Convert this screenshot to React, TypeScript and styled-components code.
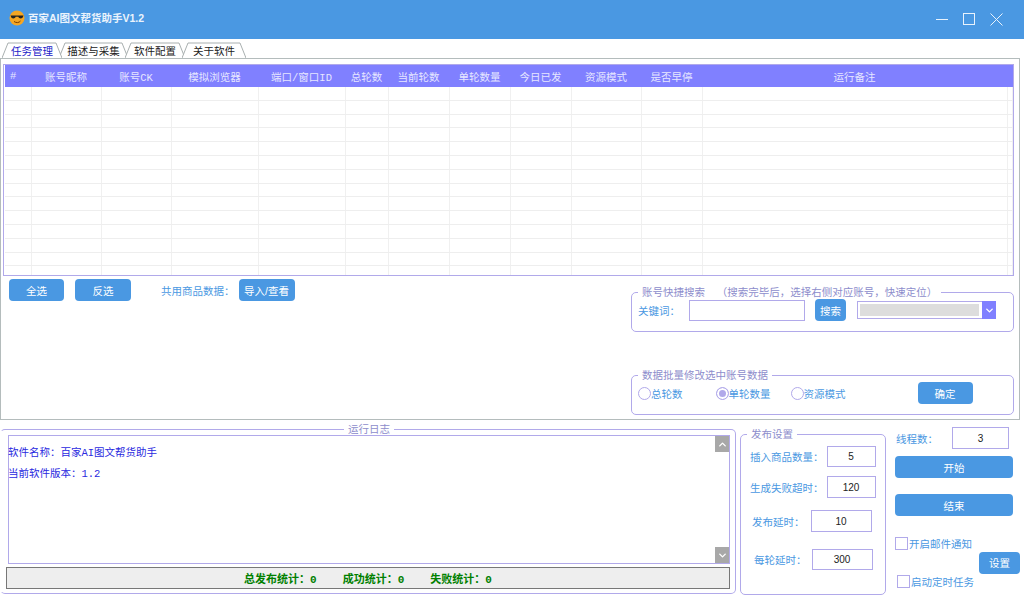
import styled, { createGlobalStyle } from 'styled-components'
import { ChevronDown, ChevronUp } from 'lucide-react'

const Global = createGlobalStyle`
  * { box-sizing: border-box; }
  html, body { margin: 0; padding: 0; background: #fff; }
  body { font-family: "Liberation Sans", "Noto Sans CJK SC", sans-serif; font-size: 10.5px; }
`

const blue = '#4a98e2'
const lilac = '#b1a9ea'
const colTemplate = '27px 70px 70px 87px 87px 43px 61px 61px 61px 70px 61px 305px 1fr'

const Page = styled.div`
  width: 1024px;
  height: 601px;
  overflow: hidden;
  display: flex;
  flex-direction: column;
`

const TitleBar = styled.header`
  height: 39px;
  flex: none;
  background: ${blue};
  display: flex;
  align-items: center;
  padding: 0 21px 4px 9px;
  color: #eaf3fc;
`

const AppName = styled.span`
  margin-left: 3px;
  font-weight: bold;
  font-size: 10.5px;
`

const WinButtons = styled.div`
  margin-left: auto;
  display: flex;
  align-items: center;
  gap: 15px;
  padding-top: 3px;
`

const TabStrip = styled.nav`
  height: 19px;
  flex: none;
  display: flex;
  align-items: flex-end;
  padding: 0 0 0 2px;
`

const Tab = styled.div<{ $w: number; $active?: boolean }>`
  position: relative;
  width: ${(p) => p.$w}px;
  height: 16px;
  margin-right: -3px;
  display: flex;
  align-items: center;
  justify-content: center;
  color: ${(p) => (p.$active ? '#2222c8' : '#222')};
  z-index: ${(p) => (p.$active ? 2 : 1)};

  svg {
    position: absolute;
    inset: 0;
    z-index: -1;
  }
`

const MainPanel = styled.section`
  height: 362px;
  flex: none;
  width: 1020px;
  border: 1px solid #b4bcbc;
  padding: 5px 5px 0 2px;
  display: flex;
  flex-direction: column;
`

const TableBox = styled.div`
  height: 212px;
  flex: none;
  border: 1px solid ${lilac};
  padding: 0 0 0 1px;
  overflow: hidden;
`

const HeadRow = styled.div`
  height: 22px;
  display: grid;
  grid-template-columns: ${colTemplate};
  background: #8080ff;
  color: #e6e6ff;
  align-items: center;
`

const HeadCell = styled.span<{ $left?: boolean }>`
  text-align: ${(p) => (p.$left ? 'left' : 'center')};
  padding: ${(p) => (p.$left ? '0 0 0 5px' : '0 2px 0 0')};
  font-family: "Liberation Mono", "Noto Sans CJK SC", monospace;
  font-size: 10.5px;
  white-space: nowrap;
`

const BodyRow = styled.div`
  height: 13.8px;
  display: grid;
  grid-template-columns: ${colTemplate};
  border-bottom: 1px solid #eeeeee;
`

const BodyCell = styled.span`
  border-right: 1px solid #f0f0f0;
`

const LowerRow = styled.div`
  flex: 1;
  display: flex;
  justify-content: space-between;
`

const ToolRow = styled.div`
  margin: 3px 0 0 6px;
  display: flex;
  align-items: center;
  height: 22px;
`

const Btn = styled.button<{ $w: number; $h?: number; $ml?: number; $mt?: number }>`
  width: ${(p) => p.$w}px;
  height: ${(p) => p.$h ?? 22}px;
  margin-left: ${(p) => p.$ml ?? 0}px;
  margin-top: ${(p) => p.$mt ?? 0}px;
  flex: none;
  padding: 0;
  border: none;
  border-radius: 4px;
  background: ${blue};
  color: #fff;
  font: inherit;
`

const Label = styled.span<{ $ml?: number }>`
  color: ${blue};
  margin-left: ${(p) => p.$ml ?? 0}px;
  white-space: nowrap;
`

const RightCol = styled.div`
  width: 383px;
  margin-top: 9px;
  display: flex;
  flex-direction: column;
  gap: 36px;
`

const Group = styled.fieldset`
  margin: 0;
  min-width: 0;
  border: 1px solid ${lilac};
  border-radius: 5px;
  color: ${blue};
`

const Legend = styled.legend<{ $center?: boolean; $ml?: number }>`
  padding: 0 4px;
  margin: ${(p) => (p.$center ? '0 auto' : `0 0 0 ${p.$ml ?? 6}px`)};
  height: 14px;
  line-height: 14px;
  color: #8d8dcc;
  white-space: pre;
`

const RowGroup = styled(Group)`
  height: 47px;
  padding: 0 6px;
  display: flex;
  align-items: center;
`

const TextBox = styled.div<{ $w: number; $h?: number; $ml?: number }>`
  width: ${(p) => p.$w}px;
  height: ${(p) => p.$h ?? 21}px;
  margin-left: ${(p) => p.$ml ?? 0}px;
  flex: none;
  border: 1px solid ${lilac};
  display: flex;
  align-items: center;
  justify-content: center;
  color: #222;
  font-size: 10px;
  background: #fff;
`

const SelectBox = styled.div`
  width: 139px;
  height: 18px;
  margin-left: 11px;
  border: 1px solid ${lilac};
  display: flex;
  padding: 2px 0 2px 2px;
  position: relative;
`

const SelectValue = styled.div`
  width: 119px;
  background: #dddddd;
`

const SelectArrow = styled.div`
  position: absolute;
  top: -1px;
  right: -1px;
  bottom: -1px;
  width: 14px;
  background: #8080ff;
  color: #fff;
  display: flex;
  align-items: center;
  justify-content: center;
`

const Radio = styled.span<{ $on?: boolean; $ml?: number }>`
  width: 13px;
  height: 13px;
  margin-left: ${(p) => p.$ml ?? 0}px;
  flex: none;
  border: 1px solid ${lilac};
  border-radius: 50%;
  background: ${(p) => (p.$on ? lilac : '#fff')};
  box-shadow: ${(p) => (p.$on ? 'inset 0 0 0 2px #fff' : 'none')};
`

const BottomRow = styled.div`
  flex: 1;
  display: flex;
  margin-top: 2px;
`

const LogGroup = styled(Group)`
  width: 736px;
  height: 172px;
  padding: 0 5px 0 7px;
  border-left-color: transparent;
`

const LogBox = styled.div`
  position: relative;
  height: 129px;
  margin-top: -1px;
  border: 1px solid ${lilac};
  padding: 7px 0 0 0;
  color: #2a2ae0;
  font-family: "Liberation Mono", "Noto Sans CJK SC", monospace;
  line-height: 21px;
`

const LogLine = styled.div`
  margin-left: -1px;
  white-space: nowrap;
`

const ScrollBtn = styled.div<{ $down?: boolean }>`
  position: absolute;
  right: 0;
  ${(p) => (p.$down ? 'bottom: 0;' : 'top: 0;')}
  width: 14px;
  height: 16px;
  background: #a8a8a8;
  color: #fff;
  display: flex;
  align-items: center;
  justify-content: center;
`

const StatusBar = styled.div`
  height: 22px;
  margin: 3px 0 0 -2px;
  border: 1px solid #777;
  background: #eeeeee;
  display: flex;
  align-items: center;
  justify-content: center;
  gap: 26px;
  color: #008000;
  font-weight: bold;
  font-size: 11px;
  font-family: "Liberation Mono", "Noto Sans CJK SC", monospace;
`

const PublishGroup = styled(Group)`
  width: 146px;
  height: 168px;
  margin-left: 4px;
  margin-top: 5px;
  padding: 0;
`

const FormRow = styled.div<{ $left: number; $gap: number; $top: number }>`
  display: flex;
  align-items: center;
  margin-top: ${(p) => p.$top}px;
  padding-left: ${(p) => p.$left}px;
  gap: ${(p) => p.$gap}px;
`

const SideCol = styled.div`
  width: 125px;
  margin-left: 9px;
  margin-top: 5px;
  display: flex;
  flex-direction: column;
`

const ThreadRow = styled.div`
  display: flex;
  align-items: center;
  gap: 14px;
  padding-left: 1px;
`

const OptionRow = styled.div`
  display: flex;
  align-items: center;
  justify-content: space-between;
  margin-top: 20px;
`

const Options = styled.div`
  display: flex;
  flex-direction: column;
  gap: 23px;
`

const CheckLine = styled.label<{ $ml?: number }>`
  display: flex;
  align-items: center;
  gap: 1px;
  margin-left: ${(p) => p.$ml ?? 0}px;
  color: ${blue};
`

const CheckBox = styled.span`
  width: 13px;
  height: 13px;
  border: 1px solid ${lilac};
  background: #fff;
`

const heads = ['#', '账号昵称', '账号CK', '模拟浏览器', '端口/窗口ID', '总轮数', '当前轮数', '单轮数量', '今日已发', '资源模式', '是否早停', '运行备注', '']

function TabShape({ w }: { w: number }) {
  const d = `M0 16 L6 1 H${w - 6} L${w} 16`
  return (
    <svg width={w} height={16} viewBox={`0 0 ${w} 16`}>
      <path d={`${d} Z`} fill="#fff" stroke="none" />
      <path d={d} fill="none" stroke="#a9b0b0" />
    </svg>
  )
}

function Smiley() {
  return (
    <svg width="16" height="16" viewBox="0 0 16 16">
      <circle cx="8" cy="8" r="7.5" fill="#f5a623" />
      <path d="M1.5 5.5 H14.5 L14 6.8 C13.5 9 10 9 9.3 6.8 H6.7 C6 9 2.5 9 2 6.8 Z" fill="#222" />
      <path d="M5 11.5 C7 13 10 13 11.5 11" fill="none" stroke="#7a3b00" strokeWidth="1" />
    </svg>
  )
}

export default function App() {
  return (
    <Page>
      <Global />
      <TitleBar>
        <Smiley />
        <AppName>百家AI图文帮货助手V1.2</AppName>
        <WinButtons>
          <svg width="12" height="12" viewBox="0 0 12 12"><path d="M0 6.5H12" stroke="#e8f2fc" strokeWidth="1" /></svg>
          <svg width="12" height="12" viewBox="0 0 12 12"><rect x="0.5" y="0.5" width="11" height="11" fill="none" stroke="#e8f2fc" /></svg>
          <svg width="13" height="13" viewBox="0 0 13 13"><path d="M0.5 0.5L12.5 12.5M12.5 0.5L0.5 12.5" stroke="#e8f2fc" /></svg>
        </WinButtons>
      </TitleBar>

      <TabStrip>
        <Tab $w={60} $active><TabShape w={60} />任务管理</Tab>
        <Tab $w={69}><TabShape w={69} />描述与采集</Tab>
        <Tab $w={60}><TabShape w={60} />软件配置</Tab>
        <Tab $w={64}><TabShape w={64} />关于软件</Tab>
      </TabStrip>

      <MainPanel>
        <TableBox>
          <HeadRow>
            {heads.map((h, i) => (
              <HeadCell key={i} $left={i === 0}>{h}</HeadCell>
            ))}
          </HeadRow>
          {Array.from({ length: 14 }).map((_, r) => (
            <BodyRow key={r}>
              {heads.map((_, c) => (
                <BodyCell key={c} />
              ))}
            </BodyRow>
          ))}
        </TableBox>

        <LowerRow>
          <ToolRow>
            <Btn $w={55}>全选</Btn>
            <Btn $w={56} $ml={11}>反选</Btn>
            <Label $ml={30}>共用商品数据：</Label>
            <Btn $w={56} $ml={4}>导入/查看</Btn>
          </ToolRow>

          <RightCol>
            <RowGroup>
              <Legend $ml={0}>{'账号快捷搜索    （搜索完毕后，选择右侧对应账号，快速定位）'}</Legend>
              <Label>关键词：</Label>
              <TextBox $w={116} $ml={9} />
              <Btn $w={31} $ml={10}>搜索</Btn>
              <SelectBox>
                <SelectValue />
                <SelectArrow><ChevronDown size={11} strokeWidth={3} /></SelectArrow>
              </SelectBox>
            </RowGroup>

            <RowGroup>
              <Legend $ml={0}>数据批量修改选中账号数据</Legend>
              <Radio />
              <Label>总轮数</Label>
              <Radio $on $ml={33} />
              <Label>单轮数量</Label>
              <Radio $ml={20} />
              <Label>资源模式</Label>
              <Btn $w={55} $ml={72}>确定</Btn>
            </RowGroup>
          </RightCol>
        </LowerRow>
      </MainPanel>

      <BottomRow>
        <LogGroup>
          <Legend $center>运行日志</Legend>
          <LogBox>
            <LogLine>软件名称：百家AI图文帮货助手</LogLine>
            <LogLine>当前软件版本：1.2</LogLine>
            <ScrollBtn><ChevronUp size={11} strokeWidth={3} /></ScrollBtn>
            <ScrollBtn $down><ChevronDown size={11} strokeWidth={3} /></ScrollBtn>
          </LogBox>
          <StatusBar>
            <span>总发布统计：0</span>
            <span>成功统计：0</span>
            <span>失败统计：0</span>
          </StatusBar>
        </LogGroup>

        <PublishGroup>
          <Legend>发布设置</Legend>
          <FormRow $left={9} $gap={3} $top={5}>
            <Label>插入商品数量：</Label>
            <TextBox $w={49}>5</TextBox>
          </FormRow>
          <FormRow $left={9} $gap={3} $top={9}>
            <Label>生成失败超时：</Label>
            <TextBox $w={49} $h={22}>120</TextBox>
          </FormRow>
          <FormRow $left={11} $gap={6} $top={12}>
            <Label>发布延时：</Label>
            <TextBox $w={61} $h={22}>10</TextBox>
          </FormRow>
          <FormRow $left={13} $gap={5} $top={17}>
            <Label>每轮延时：</Label>
            <TextBox $w={61}>300</TextBox>
          </FormRow>
        </PublishGroup>

        <SideCol>
          <ThreadRow>
            <Label>线程数：</Label>
            <TextBox $w={57} $h={22}>3</TextBox>
          </ThreadRow>
          <Btn $w={118} $mt={7}>开始</Btn>
          <Btn $w={118} $mt={16}>结束</Btn>
          <OptionRow>
            <Options>
              <CheckLine><CheckBox />开启邮件通知</CheckLine>
              <CheckLine $ml={2}><CheckBox />启动定时任务</CheckLine>
            </Options>
            <Btn $w={41}>设置</Btn>
          </OptionRow>
        </SideCol>
      </BottomRow>
    </Page>
  )
}
